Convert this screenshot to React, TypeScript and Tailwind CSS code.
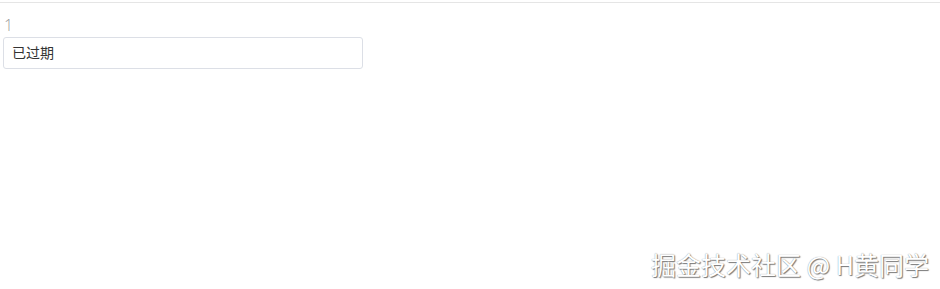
export default function App() {
  return (
    <div className="relative w-[940px] h-[289px] bg-white overflow-hidden font-['Liberation_Sans','Noto_Sans_CJK_SC',sans-serif]">
      <div className="h-[2px]" />
      <div className="border-t border-[#e5e5e5]" />
      <div className="px-[3px] pt-[13px]">
        <p className="pl-[1px] text-[16px] leading-[19px] text-[#999] font-['Open_Sans',sans-serif] font-light">1</p>
        <div className="mt-[2px] w-[360px] h-[32px] border border-[#dcdfe6] rounded-[3px] flex items-center px-[8px] text-[14px] text-[#333]">
          已过期
        </div>
      </div>
      <div className="absolute right-[11px] bottom-[9px] text-[25px] leading-[32px] text-white [text-shadow:1px_1px_1px_#777,0_0_1px_#888] font-['Noto_Sans_CJK_SC',sans-serif]">
        掘金技术社区 @ H黄同学
      </div>
    </div>
  );
}
